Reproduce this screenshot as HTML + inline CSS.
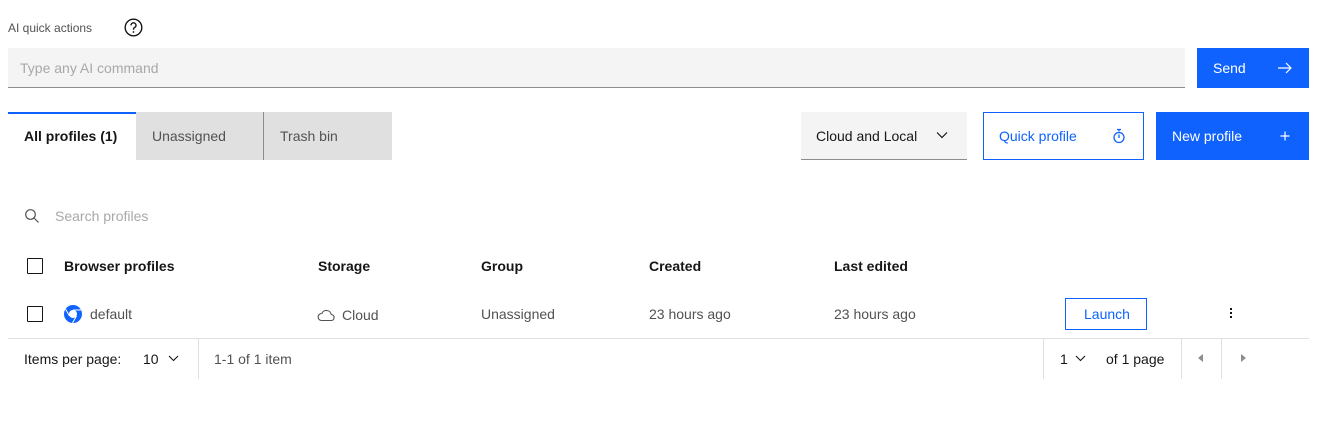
<!DOCTYPE html>
<html><head><meta charset="utf-8"><style>
*{box-sizing:border-box;margin:0;padding:0}
body{width:1324px;height:439px;background:#fff;font-family:"Liberation Sans",sans-serif;color:#161616;position:relative;overflow:hidden;font-size:14px}
.a{position:absolute}
.t{position:absolute;line-height:1;white-space:nowrap}
</style></head><body>
<div class="t" style="left:8px;top:22px;font-size:12px;color:#525252">AI quick actions</div>
<svg class="a" style="left:124px;top:18px" width="19" height="19" viewBox="0 0 19 19"><circle cx="9.5" cy="9.5" r="8.3" fill="none" stroke="#161616" stroke-width="1.4"/><path d="M7 7.4a2.5 2.5 0 1 1 3.3 2.3c-.6.3-.8.7-.8 1.3v.8" fill="none" stroke="#161616" stroke-width="1.4"/><circle cx="9.5" cy="14" r=".9" fill="#161616"/></svg>
<div class="a" style="left:8px;top:48px;width:1177px;height:40px;background:#f4f4f4;border-bottom:1px solid #8d8d8d"></div>
<div class="t" style="left:20px;top:61px;color:#a8a8a8">Type any AI command</div>
<div class="a" style="left:1197px;top:48px;width:112px;height:40px;background:#0f62fe"></div>
<div class="t" style="left:1213px;top:61px;color:#fff">Send</div>
<svg class="a" style="left:1277px;top:60px" width="16" height="16" viewBox="0 0 16 16"><path d="M1 8h13M9 3l5 5-5 5" fill="none" stroke="#fff" stroke-width="1.2"/></svg>

<div class="a" style="left:8px;top:112px;width:128px;height:48px;border-top:2px solid #0f62fe"></div>
<div class="t" style="left:24px;top:129px;font-weight:bold">All profiles (1)</div>
<div class="a" style="left:136px;top:112px;width:127px;height:48px;background:#e0e0e0"></div>
<div class="a" style="left:263px;top:112px;width:1px;height:48px;background:#8d8d8d"></div>
<div class="a" style="left:264px;top:112px;width:128px;height:48px;background:#e0e0e0"></div>
<div class="t" style="left:152px;top:129px;color:#525252">Unassigned</div>
<div class="t" style="left:280px;top:129px;color:#525252">Trash bin</div>

<div class="a" style="left:801px;top:112px;width:166px;height:48px;background:#f4f4f4;border-bottom:1px solid #8d8d8d"></div>
<div class="t" style="left:816px;top:129px">Cloud and Local</div>
<svg class="a" style="left:936px;top:131px" width="12" height="8" viewBox="0 0 12 8"><path d="M1 1.5l5 5 5-5" fill="none" stroke="#161616" stroke-width="1.2"/></svg>
<div class="a" style="left:983px;top:112px;width:161px;height:48px;border:1px solid #0f62fe"></div>
<div class="t" style="left:999px;top:129px;color:#0f62fe">Quick profile</div>
<svg class="a" style="left:1112px;top:128px" width="14" height="16" viewBox="0 0 14 16"><path d="M5 1.5h4M7 1.5v2" stroke="#0f62fe" stroke-width="1.3"/><circle cx="7" cy="9.5" r="5" fill="none" stroke="#0f62fe" stroke-width="1.3"/><path d="M7 6.5v3.5" stroke="#0f62fe" stroke-width="1.3"/></svg>
<div class="a" style="left:1156px;top:112px;width:153px;height:48px;background:#0f62fe"></div>
<div class="t" style="left:1172px;top:129px;color:#fff">New profile</div>
<svg class="a" style="left:1280px;top:131px" width="10" height="10" viewBox="0 0 10 10"><path d="M5 0.5v9M0.5 5h9" stroke="#fff" stroke-width="1.2"/></svg>

<svg class="a" style="left:24px;top:208px" width="16" height="16" viewBox="0 0 16 16"><circle cx="6.5" cy="6.5" r="4.8" fill="none" stroke="#525252" stroke-width="1.2"/><path d="M10 10l4.5 4.5" stroke="#525252" stroke-width="1.2"/></svg>
<div class="t" style="left:55px;top:209px;color:#a8a8a8">Search profiles</div>

<div class="a" style="left:27px;top:258px;width:16px;height:16px;border:1.5px solid #161616;border-radius:1px"></div>
<div class="t" style="left:64px;top:259px;font-weight:bold">Browser profiles</div>
<div class="t" style="left:318px;top:259px;font-weight:bold">Storage</div>
<div class="t" style="left:481px;top:259px;font-weight:bold">Group</div>
<div class="t" style="left:649px;top:259px;font-weight:bold">Created</div>
<div class="t" style="left:834px;top:259px;font-weight:bold">Last edited</div>

<div class="a" style="left:27px;top:306px;width:16px;height:16px;border:1.5px solid #161616;border-radius:1px"></div>
<svg class="a" style="left:64px;top:305px" width="18" height="18" viewBox="0 0 18 18"><circle cx="9" cy="9" r="9" fill="#0f62fe"/><circle cx="9" cy="9" r="4" fill="#fff"/><path d="M9 5h8M5.5 11L1.5 4M12.5 11l-4 7" stroke="#fff" stroke-width="1"/></svg>
<div class="t" style="left:90px;top:307px;color:#525252">default</div>
<svg class="a" style="left:317px;top:308px" width="18" height="14" viewBox="0 0 18 14"><path d="M4.5 12.5h9.5a3 3 0 0 0 .3-6A5 5 0 0 0 4.8 5.5 3.5 3.5 0 0 0 4.5 12.5z" fill="none" stroke="#525252" stroke-width="1.1"/></svg>
<div class="t" style="left:342px;top:308px;color:#525252">Cloud</div>
<div class="t" style="left:481px;top:307px;color:#525252">Unassigned</div>
<div class="t" style="left:649px;top:307px;color:#525252">23 hours ago</div>
<div class="t" style="left:834px;top:307px;color:#525252">23 hours ago</div>
<div class="a" style="left:1065px;top:298px;width:82px;height:32px;border:1px solid #0f62fe"></div>
<div class="t" style="left:1084px;top:307px;color:#0f62fe">Launch</div>
<div class="a" style="left:1230px;top:308px;width:2px;height:2px;background:#161616;box-shadow:0 4px #161616,0 8px #161616"></div>

<div class="a" style="left:8px;top:338px;width:1301px;height:1px;background:#e0e0e0"></div>
<div class="t" style="left:24px;top:352px">Items per page:</div>
<div class="t" style="left:143px;top:352px">10</div>
<svg class="a" style="left:168px;top:355px" width="11" height="7" viewBox="0 0 11 7"><path d="M1 1l4.5 4.5L10 1" fill="none" stroke="#161616" stroke-width="1.1"/></svg>
<div class="a" style="left:198px;top:339px;width:1px;height:40px;background:#e0e0e0"></div>
<div class="t" style="left:214px;top:352px;color:#525252">1-1 of 1 item</div>
<div class="a" style="left:1043px;top:339px;width:1px;height:40px;background:#e0e0e0"></div>
<div class="t" style="left:1060px;top:352px">1</div>
<svg class="a" style="left:1075px;top:355px" width="11" height="7" viewBox="0 0 11 7"><path d="M1 1l4.5 4.5L10 1" fill="none" stroke="#161616" stroke-width="1.1"/></svg>
<div class="t" style="left:1106px;top:352px">of 1 page</div>
<div class="a" style="left:1181px;top:339px;width:1px;height:40px;background:#e0e0e0"></div>
<div class="a" style="left:1221px;top:339px;width:1px;height:40px;background:#e0e0e0"></div>
<svg class="a" style="left:1198px;top:354px" width="6" height="8" viewBox="0 0 6 8"><path d="M5 0v8L0 4z" fill="#8d8d8d"/></svg>
<svg class="a" style="left:1240px;top:354px" width="6" height="8" viewBox="0 0 6 8"><path d="M1 0v8l5-4z" fill="#8d8d8d"/></svg>
</body></html>
